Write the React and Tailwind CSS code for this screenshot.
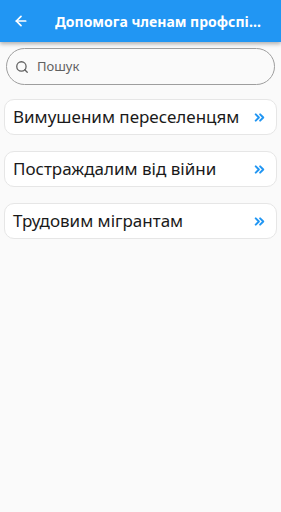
import { ArrowLeft, Search, ChevronsRight } from "lucide-react";

const ITEMS = ["Вимушеним переселенцям", "Постраждалим від війни", "Трудовим мігрантам"];

export default function App() {
    return (
        <div className="w-[281px] h-[512px] bg-[#fafafa] flex flex-col" style={{ fontFamily: '"Noto Sans", "Open Sans", sans-serif' }}>
            <div className="h-[42px] bg-[#2196f3] flex items-center shadow-[0_2px_4px_rgba(0,0,0,0.3)] shrink-0">
                <div className="w-[42px] flex justify-center">
                    <ArrowLeft className="w-[16px] h-[16px] text-white" strokeWidth={2.6} />
                </div>
                <span className="ml-[13px] text-white font-bold text-[14px] truncate w-[208px]">
                    Допомога членам профспілки
                </span>
            </div>

            <div className="px-[6px] pt-[6px]">
                <div className="h-[37px] border border-[#9e9e9e] rounded-full flex items-center pl-[8px] gap-[8px]">
                    <Search className="w-[14px] h-[14px] text-[#616161]" strokeWidth={2.2} />
                    <span className="text-[13px] text-[#616161]">Пошук</span>
                </div>
            </div>

            <div className="flex flex-col gap-[16px] px-[4px] pt-[14px]">
                {ITEMS.map((item) => (
                    <div key={item} className="h-[36px] bg-white border border-[#e6e6e6] rounded-[10px] flex items-center justify-between pl-[8px] pr-[9px]">
                        <span className="text-[17px] text-[#1a1a1a] whitespace-nowrap">{item}</span>
                        <ChevronsRight className="w-[15px] h-[15px] text-[#2196f3]" strokeWidth={3.2} />
                    </div>
                ))}
            </div>
        </div>
    );
}
